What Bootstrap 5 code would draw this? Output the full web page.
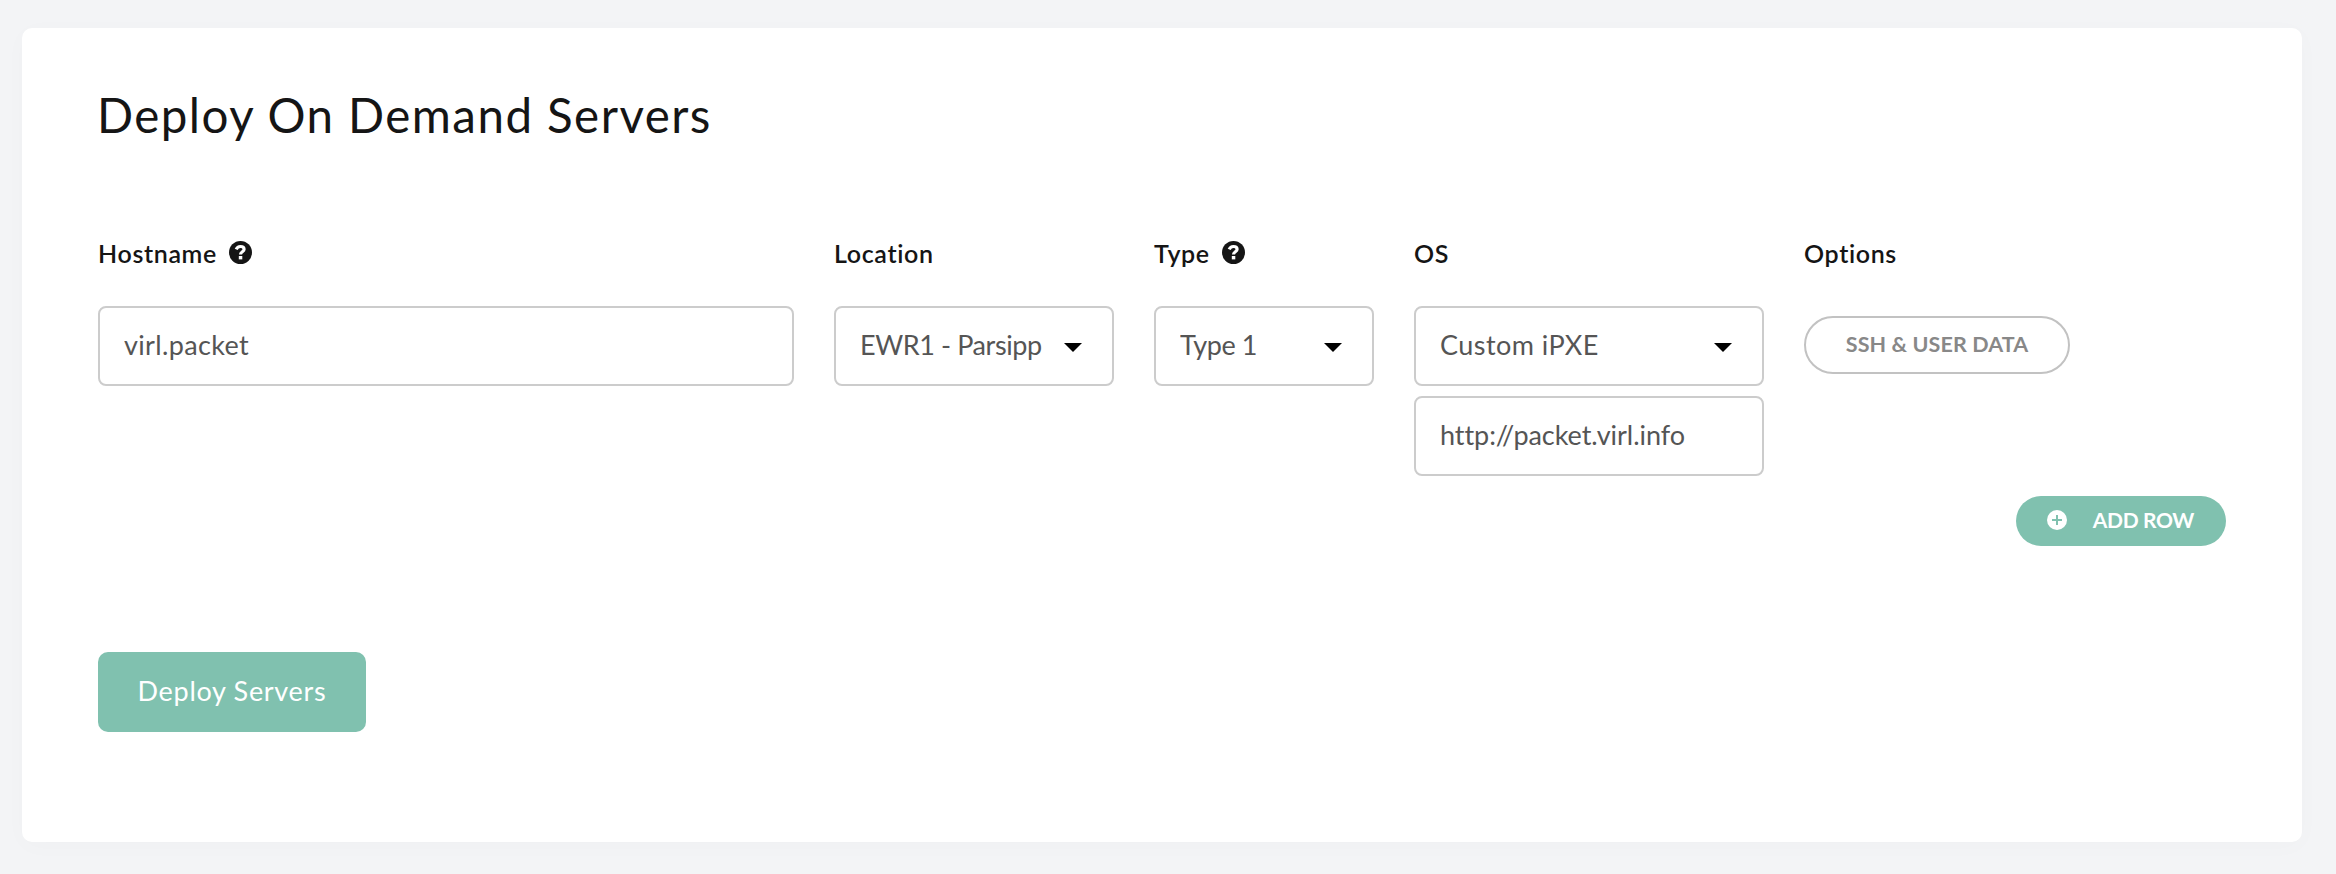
<!DOCTYPE html>
<html lang="en">
<head>
<meta charset="utf-8">
<meta name="viewport" content="width=device-width, initial-scale=1">
<title>Deploy On Demand Servers</title>
<link href="https://cdn.jsdelivr.net/npm/bootstrap@5.3.0/dist/css/bootstrap.min.css" rel="stylesheet">
<style>
  body { background: #f3f4f6; color: #151515; font-family: Lato, "Open Sans", sans-serif; }
  .panel { margin: 28px 34px 32px 22px; height: 814px; padding: 57px 76px 0; border: 0; border-radius: 10px; box-shadow: 0 4px 24px rgba(0, 0, 0, .02); }
  .panel-title { font-size: 47.5px; font-weight: 400; line-height: 60px; letter-spacing: 1.45px; margin: 0 0 88px -1px; }
  .server-row { display: grid; grid-template-columns: 696px 280px 220px 350px 266px; column-gap: 40px; }
  .field-label { height: 40px; margin-bottom: 33px; font-size: 25px; font-weight: 600; line-height: 40px; letter-spacing: .65px; gap: 12px; }
  .field-label svg { margin-top: -2px; }
  .form-control, .form-select { height: 80px; border: 2px solid #ccc; border-radius: 8px; padding: 0 24px 2px; font-size: 27px; line-height: 74px; color: #555; font-variant-ligatures: none; }
  .form-control { padding-bottom: 4px; line-height: 72px; }
  .form-select { background-image: url("data:image/svg+xml,%3Csvg xmlns='http://www.w3.org/2000/svg' viewBox='0 0 18 9'%3E%3Cpath d='M0 0h18L9 9z'/%3E%3C/svg%3E"); background-size: 18px 9px; background-position: right 30px top 35px; padding-right: 60px; }
  .track-host { letter-spacing: .35px; }
  .track-wide { letter-spacing: .45px; }
  .track-tight { letter-spacing: -.4px; }
  .ipxe-url { margin-top: 10px; letter-spacing: -.05px; }
  .btn-options { width: 266px; height: 58px; margin-top: 10px; border: 2px solid #c2c2c2; border-radius: 29px; color: #888; font-size: 21.5px; font-weight: 700; letter-spacing: .1px; line-height: 52px; padding: 0 0 2px; }
  .btn-green { background: #80c1af; color: #fff; border: 0; }
  .btn-add { width: 210px; height: 50px; margin-top: 20px; border-radius: 25px; padding: 0 32px 2px 31px; font-size: 21px; font-weight: 700; letter-spacing: -.35px; line-height: 48px; }
  .btn-deploy { width: 268px; height: 80px; margin-top: 106px; border-radius: 10px; padding: 0 0 2px; font-size: 27px; letter-spacing: .7px; }
</style>
</head>
<body>
<svg class="d-none">
  <symbol id="help" viewBox="0 0 23 23"><circle cx="11.5" cy="11.5" r="11.5" fill="#151515"/><path d="M7.2 8.4C8 6.5 9.3 5.5 11.4 5.5c2.3 0 3.7 1.1 3.7 2.8 0 2.6-3.6 2.3-3.6 5.2" fill="none" stroke="#fff" stroke-width="3.2"/><path d="M9.8 15h3.5v3.4H9.8z" fill="#fff"/></symbol>
</svg>
<main class="card panel">
  <h1 class="panel-title">Deploy On Demand Servers</h1>
  <form>
    <div class="server-row">
      <div>
        <label class="field-label d-flex align-items-center" for="hostname">Hostname
          <svg width="23" height="23" aria-hidden="true"><use href="#help"/></svg>
        </label>
        <input id="hostname" class="form-control track-host" value="virl.packet">
      </div>
      <div>
        <label class="field-label d-flex align-items-center" for="location">Location</label>
        <select id="location" class="form-select track-tight"><option>EWR1 - Parsipp</option></select>
      </div>
      <div>
        <label class="field-label d-flex align-items-center" for="type">Type
          <svg width="23" height="23" aria-hidden="true"><use href="#help"/></svg>
        </label>
        <select id="type" class="form-select track-tight"><option>Type 1</option></select>
      </div>
      <div>
        <label class="field-label d-flex align-items-center" for="os">OS</label>
        <select id="os" class="form-select track-wide"><option>Custom iPXE</option></select>
        <input class="form-control ipxe-url" value="http://packet.virl.info" aria-label="iPXE script URL">
      </div>
      <div>
        <div class="field-label d-flex align-items-center">Options</div>
        <button type="button" class="btn btn-options">SSH &amp; USER DATA</button>
      </div>
    </div>
    <div class="d-flex justify-content-end">
      <button type="button" class="btn btn-green btn-add d-flex align-items-center justify-content-between">
        <svg width="20" height="20" viewBox="0 0 20 20" aria-hidden="true"><circle cx="10" cy="10" r="10" fill="#fff"/><path d="M5 10h10M10 5v10" stroke="#80c1af" stroke-width="2"/></svg>
        <span>ADD ROW</span>
      </button>
    </div>
    <button type="button" class="btn btn-green btn-deploy">Deploy Servers</button>
  </form>
</main>
<script src="https://cdn.jsdelivr.net/npm/bootstrap@5.3.0/dist/js/bootstrap.bundle.min.js"></script>
</body>
</html>
